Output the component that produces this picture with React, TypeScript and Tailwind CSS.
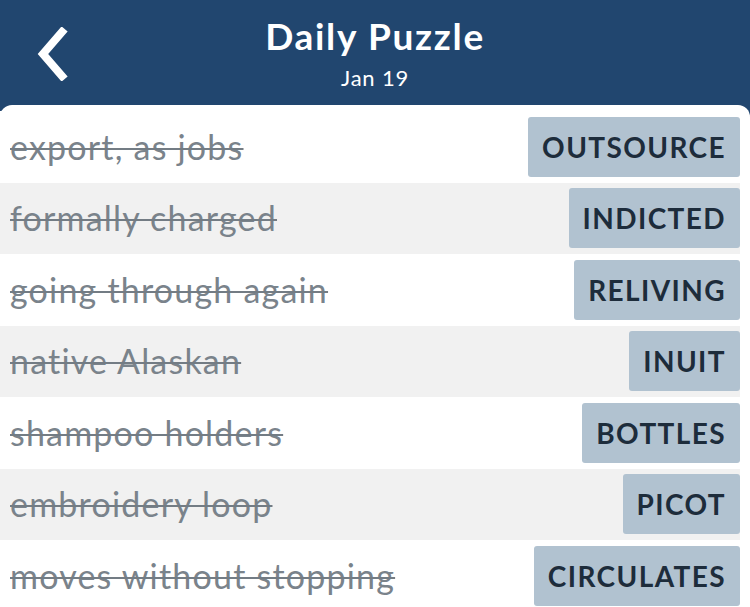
import React from "react";

const rows = [
  { clue: "export, as jobs", answer: "OUTSOURCE" },
  { clue: "formally charged", answer: "INDICTED" },
  { clue: "going through again", answer: "RELIVING" },
  { clue: "native Alaskan", answer: "INUIT" },
  { clue: "shampoo holders", answer: "BOTTLES" },
  { clue: "embroidery loop", answer: "PICOT" },
  { clue: "moves without stopping", answer: "CIRCULATES" },
];

export default function App() {
  return (
    <div className="w-[750px] h-[607px] overflow-hidden bg-[#21466f] font-['Lato','Open_Sans',sans-serif]">
      <header className="relative h-[105px] flex flex-col items-center text-white">
        <button className="absolute left-[30px] top-[26px] w-[42px] h-[56px] flex items-center justify-center">
          <svg width="34" height="54" viewBox="0 0 34 54">
            <path d="M28 5 L9 27 L28 49" fill="none" stroke="white" strokeWidth="8" strokeLinecap="square" strokeLinejoin="miter" />
          </svg>
        </button>
        <h1 className="mt-[14px] text-[37px] leading-[44px] font-bold tracking-[1.7px]">Daily Puzzle</h1>
        <p className="mt-[7px] text-[22px] leading-[26px] tracking-[0.8px]">Jan 19</p>
      </header>
      <main className="bg-white rounded-t-xl h-[502px] pt-[6px]">
        {rows.map((r, i) => (
          <div
            key={i}
            className={`h-[71.5px] mr-[10px] flex items-center justify-between ${i % 2 === 1 ? "bg-[#f1f1f1]" : "bg-white"}`}
          >
            <span className="pl-[10px] text-[34px] leading-[40px] tracking-[1.2px] text-[#7a838b] line-through decoration-[#737c84] decoration-[1.5px]">
              {r.clue}
            </span>
            <span className="h-[60px] px-[14px] flex items-center rounded-[3px] bg-[#b1c2d0] text-[28px] font-bold text-[#1d2c3b] tracking-[1.4px]">
              {r.answer}
            </span>
          </div>
        ))}
      </main>
    </div>
  );
}
